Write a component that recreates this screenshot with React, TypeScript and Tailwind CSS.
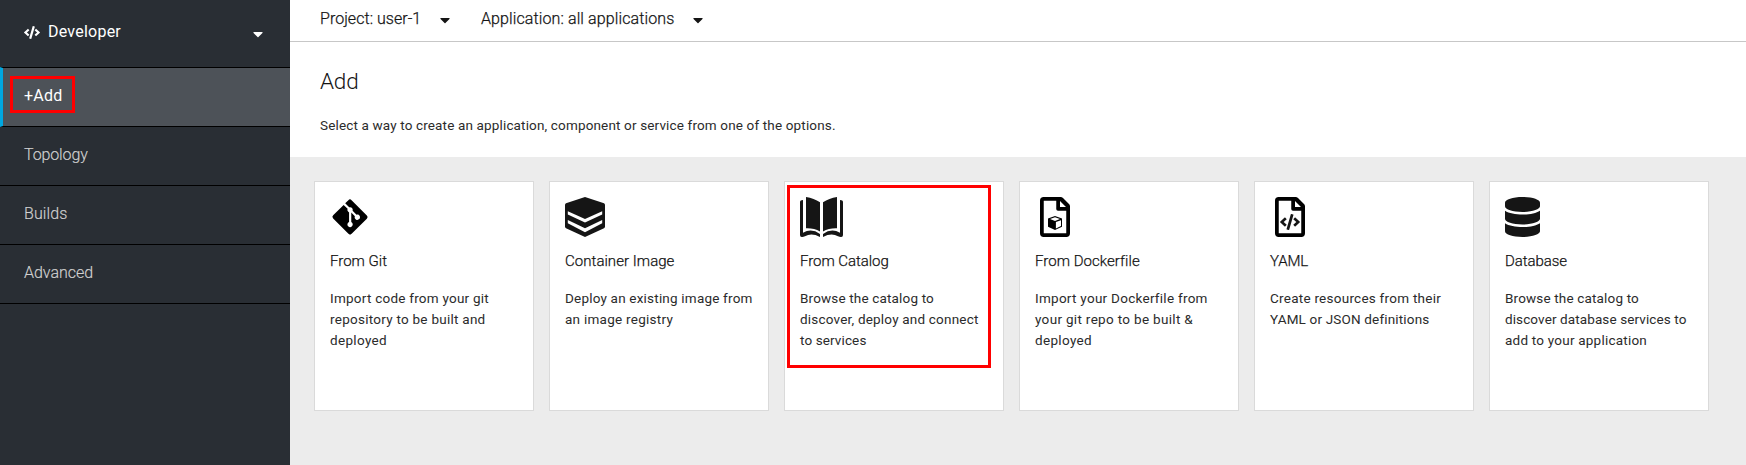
import type { ReactNode } from "react";
import { FaCode, FaCaretDown, FaDatabase, FaGitAlt } from "react-icons/fa";

type Line = { text: string; tracking: string };

const navItems = [
  { label: "Topology", tracking: "tracking-[-0.12px]" },
  { label: "Builds", tracking: "tracking-[0.12px]" },
  { label: "Advanced", tracking: "tracking-[-0.03px]" },
];

function LayersIcon() {
  return (
    <svg viewBox="0 0 40 40" className="size-10 fill-[#151515]">
      <path d="M20 0 39 6.3Q40 6.8 40 8V29.5Q40 30.700 39 31.300L20 40 1 31.300Q0 30.700 0 29.500V8Q0 6.800 1 6.300ZM2.800 14.300V17.500L20 25.500 37.200 17.500V14.300L20 22ZM2.800 23V26.200L20 35.200 37.200 26.200V23L20 31.200Z" fillRule="evenodd" />
    </svg>
  );
}

function CatalogIcon() {
  return (
    <svg viewBox="0 0 43 40" className="h-10 w-[43px] fill-[#151515]">
      <path d="M6 0Q14 1.200 20 5.300V34.500Q14 31 6 31.300Z" />
      <path d="M3 3V35.800Q11.500 30.800 20 37V40Q11.500 35.500 5 39.300Q0 41.200 0 38V5Q0 3 3 3Z" />
      <path d="M37 0Q29 1.200 23 5.300V34.500Q29 31 37 31.300Z" />
      <path d="M40 3V35.800Q31.500 30.800 23 37V40Q31.500 35.500 38 39.300Q43 41.200 43 38V5Q43 3 40 3Z" />
    </svg>
  );
}

function FileIcon({ children }: { children: ReactNode }) {
  return (
    <svg viewBox="0 0 40 40" className="size-10 fill-black">
      <path
        fillRule="evenodd"
        d="M8.700 0H25.600Q27 0 28 1L34 7Q35 8 35 9.400V36.300Q35 40 31.300 40H8.700Q5 40 5 36.300V3.700Q5 0 8.700 0ZM8.750 3.750V36.250H31.250V13.750H23Q21.250 13.750 21.250 12V3.750ZM25 4V10H31Z"
      />
      {children}
    </svg>
  );
}

function DockerfileIcon() {
  return (
    <FileIcon>
      <path d="M20 19 27 21.600V29.700L20 33 13 29.700V21.600Z" />
      <path d="M20 20.300 25 22.100 20 24 15 22.100Z" fill="white" />
      <path d="M20.900 25.100 26 23.200V29L20.900 31.500Z" fill="white" />
    </FileIcon>
  );
}

function YamlIcon() {
  return (
    <FileIcon>
      <FaCode x="10" y="17" className="h-4 w-5" />
    </FileIcon>
  );
}

const cards: { icon: ReactNode; title: Line; lines: Line[]; highlighted?: boolean }[] = [
  {
    icon: <FaGitAlt className="size-10 text-black" />,
    title: { text: "From Git", tracking: "tracking-normal" },
    lines: [
      { text: "Import code from your git", tracking: "tracking-[0.24px]" },
      { text: "repository to be built and", tracking: "tracking-[0.26px]" },
      { text: "deployed", tracking: "tracking-[0.34px]" },
    ],
  },
  {
    icon: <LayersIcon />,
    title: { text: "Container Image", tracking: "tracking-[0.04px]" },
    lines: [
      { text: "Deploy an existing image from", tracking: "tracking-[0.2px]" },
      { text: "an image registry", tracking: "tracking-[0.26px]" },
    ],
  },
  {
    icon: <CatalogIcon />,
    title: { text: "From Catalog", tracking: "tracking-[-0.05px]" },
    lines: [
      { text: "Browse the catalog to", tracking: "tracking-[0.16px]" },
      { text: "discover, deploy and connect", tracking: "tracking-[0.2px]" },
      { text: "to services", tracking: "tracking-[0.12px]" },
    ],
    highlighted: true,
  },
  {
    icon: <DockerfileIcon />,
    title: { text: "From Dockerfile", tracking: "tracking-[0.04px]" },
    lines: [
      { text: "Import your Dockerfile from", tracking: "tracking-[0.27px]" },
      { text: "your git repo to be built &", tracking: "tracking-[0.32px]" },
      { text: "deployed", tracking: "tracking-[0.34px]" },
    ],
  },
  {
    icon: <YamlIcon />,
    title: { text: "YAML", tracking: "tracking-[-0.1px]" },
    lines: [
      { text: "Create resources from their", tracking: "tracking-[0.25px]" },
      { text: "YAML or JSON definitions", tracking: "tracking-[0.17px]" },
    ],
  },
  {
    icon: <FaDatabase className="h-10 w-[35px]" />,
    title: { text: "Database", tracking: "tracking-[-0.05px]" },
    lines: [
      { text: "Browse the catalog to", tracking: "tracking-[0.16px]" },
      { text: "discover database services to", tracking: "tracking-[0.11px]" },
      { text: "add to your application", tracking: "tracking-[0.22px]" },
    ],
  },
];

function Sidebar() {
  return (
    <aside className="w-[290px] shrink-0 bg-[#292e34] text-white">
      <button className="flex h-[67px] w-full items-center pr-6 pb-[3px] pl-6">
        <FaCode className="h-[13px] w-4" />
        <span className="ml-[8px] text-[16px] tracking-[0.23px]">Developer</span>
        <FaCaretDown className="mt-[3px] ml-auto size-4" />
      </button>
      <nav>
        <a className="relative flex h-[60px] items-center border-y border-l-[3px] border-y-black border-l-[#00a8e1] bg-[#4d5258] pb-[2px] pl-[21px] text-[16px] tracking-[0.23px]">
          +Add
          <span className="absolute top-2 left-[7px] h-[37px] w-[65px] border-[3px] border-[#f00]" />
        </a>
        {navItems.map((item) => (
          <a
            key={item.label}
            className={`flex h-[59px] items-center border-b border-black pb-[2px] pl-6 text-[16px] font-light text-[#d1d1d1] [-webkit-text-stroke:0.15px] ${item.tracking}`}
          >
            {item.label}
          </a>
        ))}
      </nav>
    </aside>
  );
}

export default function App() {
  return (
    <div className="flex h-[465px] overflow-hidden bg-[#ececec] font-['Roboto',sans-serif] text-[#151515]">
      <Sidebar />
      <main className="min-w-0 flex-1">
        <div className="flex h-[42px] items-center border-b border-[#c7c7c7] bg-white pb-[4px] pl-[30px] text-[16px] font-light">
          <span className="w-[117px] tracking-[0.04px] [-webkit-text-stroke:0.25px]">Project: user-1</span>
          <FaCaretDown className="mt-[3px] size-4" />
          <span className="ml-[28px] w-[209px] tracking-[0.11px] [-webkit-text-stroke:0.25px]">
            Application: all applications
          </span>
          <FaCaretDown className="mt-[3px] size-4" />
        </div>
        <header className="h-[115px] bg-white pt-[24px] pl-[30px]">
          <h1 className="text-[22.500px] leading-[30px] font-light tracking-[-0.2px]">Add</h1>
          <p className="mt-[19px] text-[13.500px] leading-[21px] tracking-[0.15px] text-[#2b2b2b]">
            Select a way to create an application, component or service from one of the options.
          </p>
        </header>
        <section className="flex gap-[15px] pt-6 pl-6">
          {cards.map((card) => (
            <article
              key={card.title.text}
              className="relative h-[230px] w-[220px] shrink-0 border border-[#dadada] bg-white px-[15px] pt-[15px]"
            >
              {card.icon}
              <h2
                className={`mt-[13px] text-[15px] leading-[22px] font-light [-webkit-text-stroke:0.25px] ${card.title.tracking}`}
              >
                {card.title.text}
              </h2>
              <div className="mt-[16px] text-[13.500px] leading-[21px] text-[#2b2b2b]">
                {card.lines.map((line) => (
                  <p key={line.text} className={`whitespace-nowrap ${line.tracking}`}>
                    {line.text}
                  </p>
                ))}
              </div>
              {card.highlighted && (
                <span className="absolute top-[3px] left-[2px] h-[183px] w-[204px] border-[3px] border-[#f00]" />
              )}
            </article>
          ))}
        </section>
      </main>
    </div>
  );
}
